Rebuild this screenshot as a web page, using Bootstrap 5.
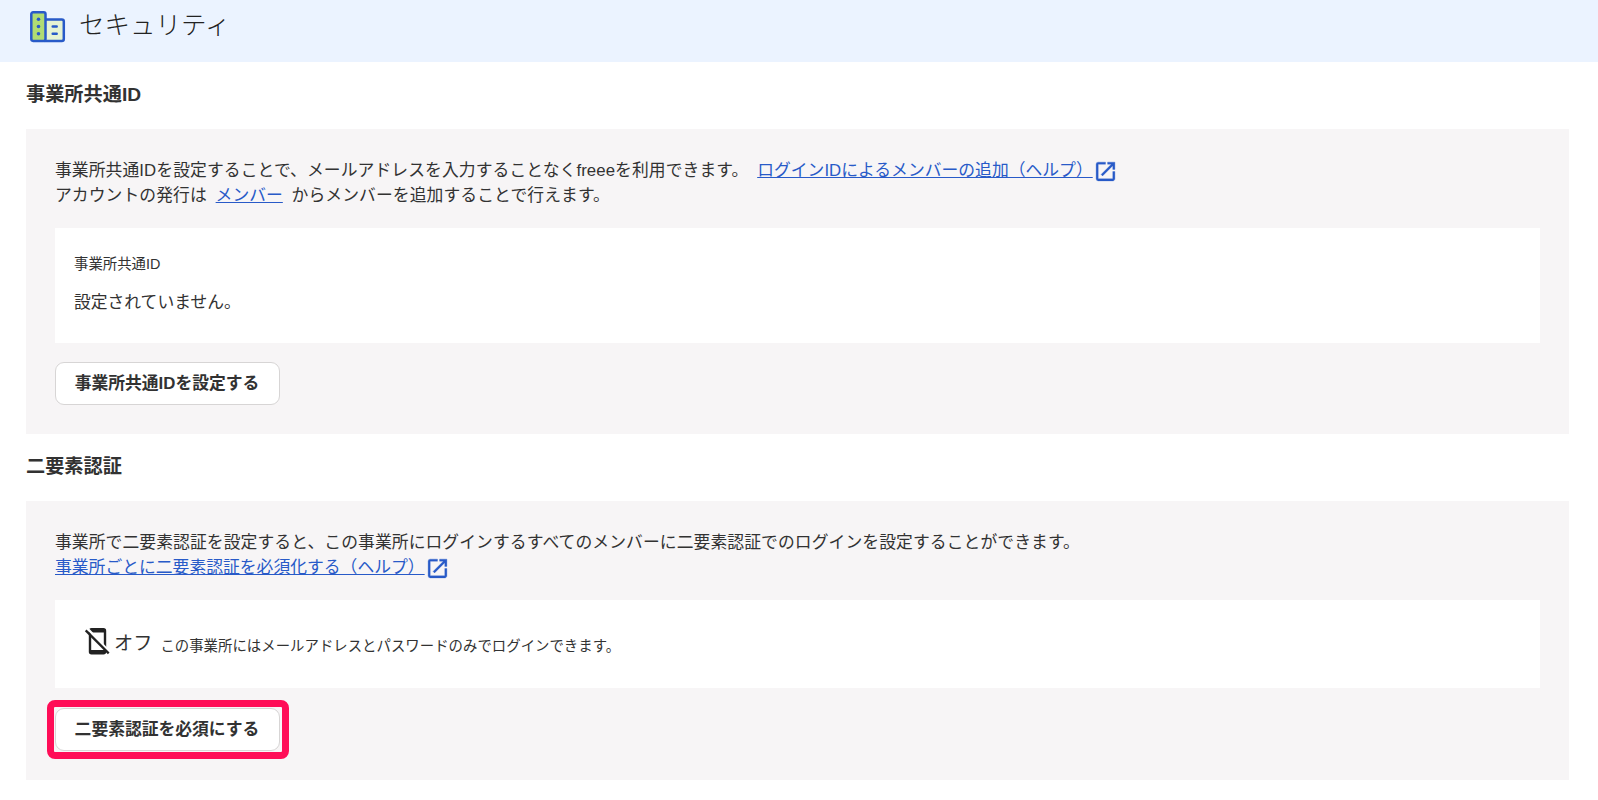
<!DOCTYPE html>
<html lang="ja">
<head>
<meta charset="utf-8">
<meta name="viewport" content="width=device-width, initial-scale=1">
<title>セキュリティ</title>
<link href="https://cdn.jsdelivr.net/npm/bootstrap@5.3.0/dist/css/bootstrap.min.css" rel="stylesheet">
<style>
body{font-family:"Liberation Sans","Noto Sans CJK JP",sans-serif;font-size:16.8px;line-height:25.2px;color:#323232;background:#fff;overflow:hidden}
.page-head{height:62px;background:#ebf3ff;padding:9px 0 0 29px;gap:12px}
.page-head h1{font-size:25.5px;line-height:32px;font-weight:300;margin:0;color:#222}
.page-body{padding:0 29px 0 26px}
.sec-title{height:67px;font-size:19.2px;line-height:29px;font-weight:700;margin:0;padding-top:18px}
.panel{background:#f7f5f6;padding:29px 29px 29px}
.panel p{height:50px;line-height:25px;margin:0 0 20px;letter-spacing:.09px}
.panel a{color:#285ac8;letter-spacing:.02px}
.ext{width:25px;height:25px;margin:-4px 0 -4px 0;vertical-align:-4px;fill:#285ac8;stroke:#285ac8;stroke-width:.3}
.box{background:#fff;margin-bottom:19px}
.box-id{height:115px;padding:25px 19px}
.box-id .note{margin-bottom:15px}
.box-off{height:88px;padding:0 29px;margin-bottom:20px}
.note{font-size:14.4px;line-height:22px}
.box-off .note{padding-top:3px;letter-spacing:.02px}
.state{font-size:19.2px;margin-left:1px;padding-bottom:1px}
.phone{width:29px;height:29px;margin-bottom:5px}
.btn-plain{width:225px;height:43px;padding:1px 1px 0 0;border:1px solid #d7d5d5;border-radius:9px;background:#fff;color:#323232;font-size:16.8px;line-height:40px;font-weight:700}
.ring{width:fit-content;border:7px solid #ff0d57;border-radius:8px;padding:1px 2px 1px 1px;margin:-8px 0 -8px -8px}
</style>
</head>
<body>
<header class="page-head d-flex align-items-start">
<svg width="38" height="35" viewBox="0 0 38 35"><path d="M3 4h13v28H3z" fill="#b0dc73"/><path d="M16 10.500h18.500v21H16z" fill="#e6f3d3"/><g fill="none" stroke="#285ac8" stroke-width="2.500"><rect x="2.300" y="3.300" width="14.200" height="28.600" rx="1.800"/><path d="M16.500 10.400h16.300a2 2 0 0 1 2 2v17.500a2 2 0 0 1-2 2H15"/><path d="M23.700 17.600h4M23.700 24.700h4" stroke-linecap="round"/></g><g fill="#285ac8"><circle cx="9.500" cy="10.300" r="1.800"/><circle cx="9.500" cy="17.500" r="1.800"/><circle cx="9.500" cy="24.700" r="1.800"/></g></svg>
<h1>セキュリティ</h1>
</header>
<main class="page-body">
<h2 class="sec-title">事業所共通ID</h2>
<section class="panel">
<p>事業所共通IDを設定することで、メールアドレスを入力することなくfreeeを利用できます。 <a class="ms-1" href="#">ログインIDによるメンバーの追加（ヘルプ）</a><svg class="ext" viewBox="0 0 24 24"><path d="M19 19H5V5h7V3H5a2 2 0 0 0-2 2v14a2 2 0 0 0 2 2h14c1.100 0 2-.9 2-2v-7h-2v7zM14 3v2h3.590l-9.830 9.830 1.410 1.410L19 6.410V10h2V3h-7z"/></svg><br>アカウントの発行は <a class="mx-1" href="#">メンバー</a> からメンバーを追加することで行えます。</p>
<div class="box box-id"><div class="note">事業所共通ID</div><div>設定されていません。</div></div>
<button class="btn btn-plain d-block" type="button">事業所共通IDを設定する</button>
</section>
<h2 class="sec-title">二要素認証</h2>
<section class="panel">
<p>事業所で二要素認証を設定すると、この事業所にログインするすべてのメンバーに二要素認証でのログインを設定することができます。<br><a href="#">事業所ごとに二要素認証を必須化する（ヘルプ）</a><svg class="ext" viewBox="0 0 24 24"><path d="M19 19H5V5h7V3H5a2 2 0 0 0-2 2v14a2 2 0 0 0 2 2h14c1.100 0 2-.9 2-2v-7h-2v7zM14 3v2h3.590l-9.830 9.830 1.410 1.410L19 6.410V10h2V3h-7z"/></svg></p>
<div class="box box-off d-flex align-items-center"><svg class="phone" viewBox="0 0 29 29"><path d="M7.500 1h12a2.700 2.700 0 0 1 2.700 2.700v21a2.700 2.700 0 0 1-2.700 2.700h-12a2.700 2.700 0 0 1-2.700-2.700v-21A2.700 2.700 0 0 1 7.500 1zM7.200 5.500v17.500h12.600V5.500z" fill="#222" fill-rule="evenodd"/><path d="M3.500 1.700l21.500 22.600" stroke="#fff" stroke-width="2.400"/><path d="M1.700 3.400l23 23" stroke="#222" stroke-width="2.300"/></svg><span class="state">オフ</span><span class="note ms-2">この事業所にはメールアドレスとパスワードのみでログインできます。</span></div>
<div class="ring"><button class="btn btn-plain d-block" type="button">二要素認証を必須にする</button></div>
</section>
</main>
<script src="https://cdn.jsdelivr.net/npm/bootstrap@5.3.0/dist/js/bootstrap.bundle.min.js"></script>
</body>
</html>
